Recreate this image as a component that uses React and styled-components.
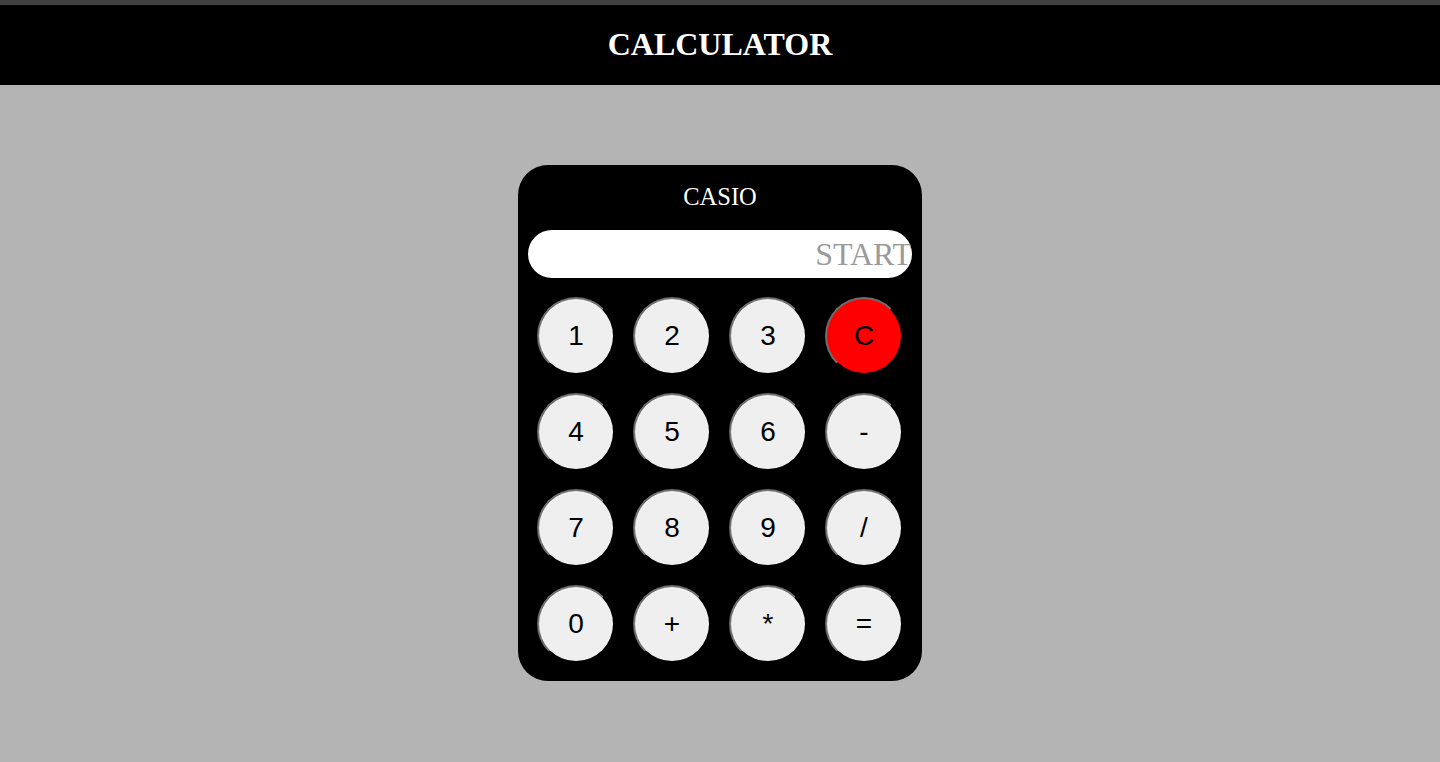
import React from "react";
import styled, { createGlobalStyle } from "styled-components";

const Global = createGlobalStyle`
  html, body { margin: 0; padding: 0; }
  body {
    background: #b4b4b4;
    font-family: "Liberation Serif", "Times New Roman", serif;
    min-height: 762px;
  }
`;

const TopStrip = styled.div`
  height: 5px;
  background: #404040;
`;

const Header = styled.header`
  height: 80px;
  background: #000;
  display: flex;
  align-items: center;
  justify-content: center;
`;

const Title = styled.h1`
  margin: 0;
  color: #fff;
  font-family: "Liberation Serif", "Times New Roman", serif;
  font-size: 32px;
  font-weight: bold;
  line-height: 1;
  transform: translateY(-1px);
`;

const Main = styled.main`
  display: flex;
  justify-content: center;
  padding-top: 80px;
`;

const Card = styled.div`
  width: 404px;
  height: 516px;
  box-sizing: border-box;
  background: #000;
  border-radius: 30px;
  padding: 0 10px;
  display: flex;
  flex-direction: column;
`;

const Brand = styled.div`
  height: 65px;
  display: flex;
  align-items: center;
  justify-content: center;
  color: #fff;
  font-size: 24.5px;
  line-height: 1;
`;

const Display = styled.input`
  box-sizing: border-box;
  width: 384px;
  height: 48px;
  border: none;
  border-radius: 24px;
  background: #fff;
  padding: 0;
  margin: 0;
  outline: none;
  text-align: right;
  font-family: "Liberation Serif", "Times New Roman", serif;
  font-size: 32px;
  color: #000;
  &::placeholder {
    color: #9a9a9a;
    opacity: 1;
  }
`;

const Keys = styled.div`
  display: grid;
  grid-template-columns: repeat(4, 78px);
  grid-auto-rows: 78px;
  gap: 18px;
  justify-content: center;
  margin-top: 19px;
`;

const Key = styled.button`
  box-sizing: border-box;
  width: 78px;
  height: 78px;
  padding: 0;
  border-radius: 50%;
  border: 2px solid;
  border-color: #6e6e6e #000 #000 #6e6e6e;
  background: ${(p) => (p.$danger ? "#ff0000" : "#efefef")};
  color: #000;
  font-family: "Liberation Sans", Arial, sans-serif;
  font-size: 28px;
  display: flex;
  align-items: center;
  justify-content: center;
  cursor: pointer;
`;

const keys = ["1", "2", "3", "C", "4", "5", "6", "-", "7", "8", "9", "/", "0", "+", "*", "="];

export default function App() {
  return (
    <>
      <Global />
      <TopStrip />
      <Header>
        <Title>CALCULATOR</Title>
      </Header>
      <Main>
        <Card>
          <Brand>CASIO</Brand>
          <Display placeholder="START" readOnly />
          <Keys>
            {keys.map((k) => (
              <Key key={k} $danger={k === "C"}>
                {k}
              </Key>
            ))}
          </Keys>
        </Card>
      </Main>
    </>
  );
}
